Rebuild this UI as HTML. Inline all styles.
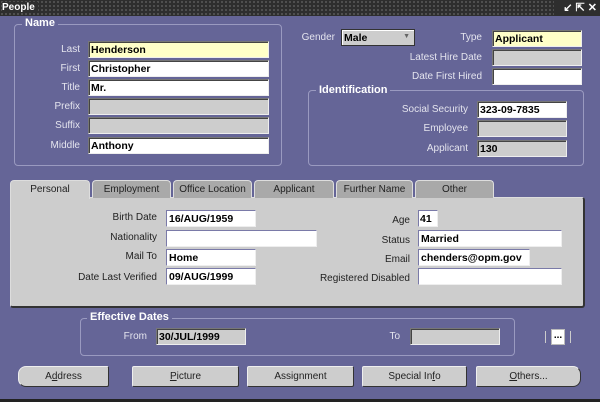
<!DOCTYPE html>
<html><head><meta charset="utf-8"><style>
*{margin:0;padding:0;box-sizing:border-box}
body{width:600px;height:402px;background:#656597;font-family:"Liberation Sans",sans-serif;font-size:10px;position:relative;overflow:hidden}
.a{position:absolute}
.tb{left:0;top:0;width:600px;height:16px;background:#2e2e2e;background-image:radial-gradient(#5a5a5a 0.8px,transparent 1px);background-size:4px 4px}
.tb span{position:absolute;left:2px;top:2px;color:#fff;font-weight:bold;font-size:10px;background:#2e2e2e;padding-right:3px}
.grp{border:1px solid #9a9ac0;border-radius:4px}
.gl{color:#fff;font-weight:bold;background:#656597;padding:0 3px;font-size:11px}
.lb{color:#e4e4ee;text-align:right;font-size:10px}
.pl{color:#222;text-align:right;font-size:10px}
.f{background:#fff;border:1px solid #777;border-right-color:#eee;border-bottom-color:#eee;box-shadow:inset 1px 1px 0 #444;font-weight:bold;color:#000;padding:1px 0 0 2px;font-size:10.5px;height:17px;line-height:14px}
.y{background:#ffffc8}
.g{background:#cdcdcd}
.pf{background:#fff;border:1px solid #7a7aa8;border-right-color:#eee;border-bottom-color:#eee;font-weight:bold;padding:1px 0 0 2px;height:17px;line-height:14px;font-size:10.5px}
.tab{top:180px;height:18px;background:#a9a9a9;border:1px solid #ddd;border-bottom:none;border-radius:4px 4px 0 0;text-align:center;color:#222;line-height:17px;font-size:10px}
.btn{top:366px;height:21px;background:#cdcdcd;border:1px solid #eee;border-right-color:#333;border-bottom-color:#333;text-align:center;line-height:19px;color:#222;font-size:10px;border-radius:2px}
</style></head><body>
<div class="a tb"><span>People</span><div class="a" style="right:0;top:0;width:46px;height:16px;background:#2e2e2e;color:#fff;font-size:11px;line-height:16px;font-weight:bold;text-align:right;padding-right:3px;white-space:nowrap">↙ ⇱ ✕</div></div>

<div class="a grp" style="left:14px;top:24px;width:268px;height:142px"></div>
<div class="a gl" style="left:22px;top:17px">Name</div>
<div class="a lb" style="left:20px;top:44px;width:60px">Last</div>
<div class="a f y" style="left:88px;top:41px;width:181px">Henderson</div>
<div class="a lb" style="left:20px;top:63px;width:60px">First</div>
<div class="a f" style="left:88px;top:60px;width:181px">Christopher</div>
<div class="a lb" style="left:20px;top:82px;width:60px">Title</div>
<div class="a f" style="left:88px;top:79px;width:181px">Mr.</div>
<div class="a lb" style="left:20px;top:101px;width:60px">Prefix</div>
<div class="a f g" style="left:88px;top:98px;width:181px"></div>
<div class="a lb" style="left:20px;top:120px;width:60px">Suffix</div>
<div class="a f g" style="left:88px;top:117px;width:181px"></div>
<div class="a lb" style="left:20px;top:140px;width:60px">Middle</div>
<div class="a f" style="left:88px;top:137px;width:181px">Anthony</div>

<div class="a lb" style="left:290px;top:32px;width:45px">Gender</div>
<div class="a f g" style="left:341px;top:29px;width:74px;border:1px solid #333;box-shadow:inset 1px 1px 0 #fff">Male<span style="position:absolute;right:4px;top:0;font-size:7px;color:#666">▼</span></div>
<div class="a lb" style="left:400px;top:32px;width:82px">Type</div>
<div class="a f y" style="left:492px;top:30px;width:90px">Applicant</div>
<div class="a lb" style="left:380px;top:52px;width:102px">Latest Hire Date</div>
<div class="a f g" style="left:492px;top:49px;width:90px"></div>
<div class="a lb" style="left:380px;top:71px;width:102px">Date First Hired</div>
<div class="a f" style="left:492px;top:68px;width:90px"></div>

<div class="a grp" style="left:308px;top:90px;width:276px;height:76px"></div>
<div class="a gl" style="left:316px;top:84px">Identification</div>
<div class="a lb" style="left:360px;top:104px;width:108px">Social Security</div>
<div class="a f" style="left:477px;top:101px;width:90px">323-09-7835</div>
<div class="a lb" style="left:360px;top:123px;width:108px">Employee</div>
<div class="a f g" style="left:477px;top:120px;width:90px"></div>
<div class="a lb" style="left:360px;top:143px;width:108px">Applicant</div>
<div class="a f g" style="left:477px;top:140px;width:90px">130</div>

<div class="a" style="left:10px;top:197px;width:575px;height:111px;background:#cdcdcd;border:1px solid #ddd;border-right:2px solid #333;border-bottom:2px solid #333;border-radius:0 3px 3px 3px"></div>
<div class="a tab" style="left:10px;width:80px;height:19px;background:#cdcdcd;z-index:2">Personal</div>
<div class="a tab" style="left:92px;width:79px">Employment</div>
<div class="a tab" style="left:173px;width:79px">Office Location</div>
<div class="a tab" style="left:254px;width:80px">Applicant</div>
<div class="a tab" style="left:336px;width:77px">Further Name</div>
<div class="a tab" style="left:415px;width:79px">Other</div>

<div class="a pl" style="left:40px;top:212px;width:117px">Birth Date</div>
<div class="a pf" style="left:166px;top:210px;width:90px">16/AUG/1959</div>
<div class="a pl" style="left:40px;top:232px;width:117px">Nationality</div>
<div class="a pf g" style="left:166px;top:230px;width:151px"></div>
<div class="a pl" style="left:40px;top:251px;width:117px">Mail To</div>
<div class="a pf" style="left:166px;top:249px;width:90px">Home</div>
<div class="a pl" style="left:40px;top:272px;width:117px">Date Last Verified</div>
<div class="a pf" style="left:166px;top:268px;width:90px">09/AUG/1999</div>

<div class="a pl" style="left:280px;top:215px;width:130px">Age</div>
<div class="a pf g" style="left:418px;top:210px;width:20px;padding-left:1px">41</div>
<div class="a pl" style="left:280px;top:235px;width:130px">Status</div>
<div class="a pf" style="left:418px;top:230px;width:144px">Married</div>
<div class="a pl" style="left:280px;top:254px;width:130px">Email</div>
<div class="a pf" style="left:418px;top:249px;width:112px">chenders@opm.gov</div>
<div class="a pl" style="left:280px;top:273px;width:130px">Registered Disabled</div>
<div class="a pf g" style="left:418px;top:268px;width:144px"></div>

<div class="a grp" style="left:80px;top:318px;width:435px;height:38px"></div>
<div class="a gl" style="left:87px;top:311px">Effective Dates</div>
<div class="a lb" style="left:110px;top:331px;width:37px">From</div>
<div class="a f g" style="left:156px;top:328px;width:90px">30/JUL/1999</div>
<div class="a lb" style="left:380px;top:331px;width:20px">To</div>
<div class="a f g" style="left:410px;top:328px;width:90px"></div>
<div class="a" style="left:545px;top:331px;width:1px;height:12px;background:#ccc"></div>
<div class="a" style="left:551px;top:329px;width:14px;height:16px;background:#fff;border:1px solid #bbb;font-weight:bold;font-size:10px;line-height:12px;text-align:center">...</div>
<div class="a" style="left:570px;top:331px;width:1px;height:12px;background:#ccc"></div>

<div class="a btn" style="left:18px;width:91px;border-radius:8px 2px 2px 8px">A<u>d</u>dress</div>
<div class="a btn" style="left:132px;width:107px"><u>P</u>icture</div>
<div class="a btn" style="left:247px;width:107px">Assignment</div>
<div class="a btn" style="left:362px;width:105px">Special In<u>f</u>o</div>
<div class="a btn" style="left:476px;width:105px;border-radius:2px 8px 8px 2px"><u>O</u>thers...</div>
<div class="a" style="left:0;top:399px;width:600px;height:3px;background:#222"></div>
</body></html>
